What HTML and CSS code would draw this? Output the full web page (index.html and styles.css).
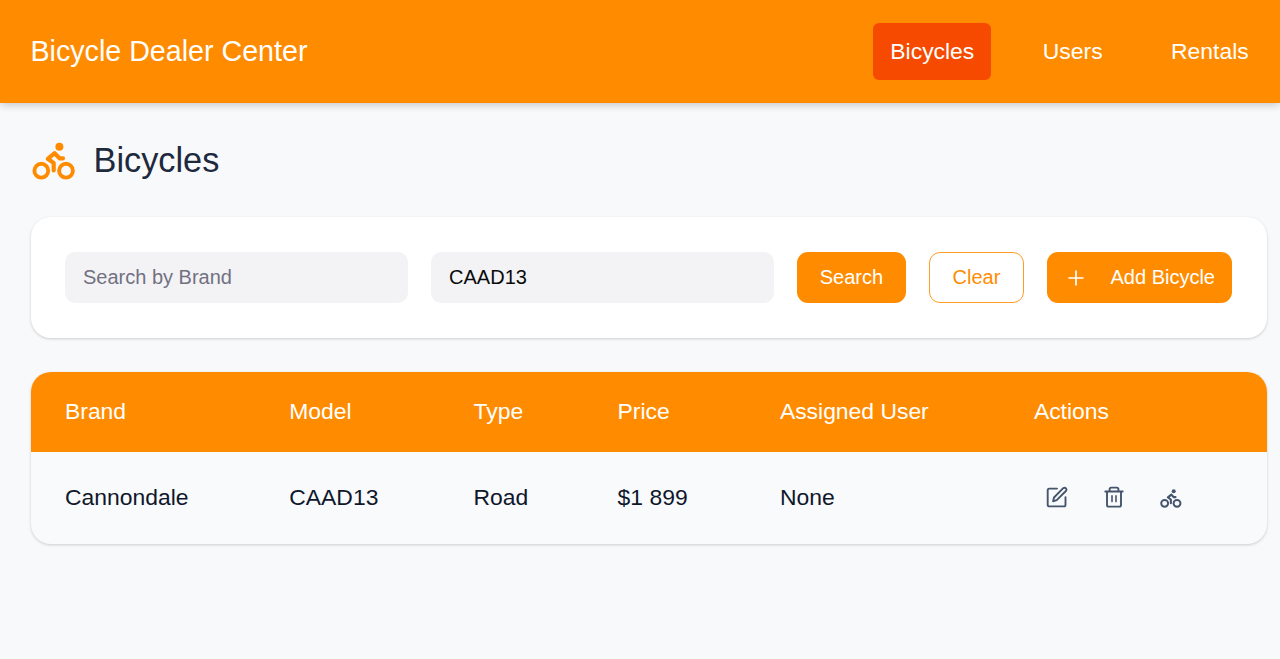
FILE: index.html
```html
<!DOCTYPE html>
<html lang="en">
<head>
<meta charset="utf-8">
<title>Bicycle Dealer Center</title>
<link rel="stylesheet" href="styles.css">
</head>
<body>
<svg class="symbols" aria-hidden="true">
  <symbol id="rider" viewBox="0 0 44 38">
    <g fill="none" stroke="currentColor" stroke-width="3.9" stroke-linejoin="round" stroke-linecap="round">
      <circle cx="9.3" cy="28.7" r="6.9"/><circle cx="34" cy="28.7" r="6.9"/>
      <path stroke-width="4.2" d="M31 16.3H27.5L22.6 11.2L15.8 16.8L21.7 21V28.5"/>
    </g>
    <circle cx="27.4" cy="4.7" r="4" fill="currentColor"/>
  </symbol>
</svg>
<header class="topbar">
  <div class="brand">Bicycle Dealer Center</div>
  <nav class="nav">
    <a class="nav-link active">Bicycles</a>
    <a class="nav-link">Users</a>
    <a class="nav-link">Rentals</a>
  </nav>
</header>
<main class="page">
  <div class="page-title">
    <svg class="title-icon"><use href="#rider"/></svg>
    <h1>Bicycles</h1>
  </div>
  <section class="card filters">
    <input class="field" placeholder="Search by Brand">
    <input class="field" placeholder="Search by Model" value="CAAD13">
    <button class="btn search">Search</button>
    <button class="btn clear">Clear</button>
    <button class="btn add">
      <svg class="plus" viewBox="0 0 16 16"><path d="M8 .5V15.5M.5 8H15.5" stroke="currentColor" stroke-width="1.7"/></svg>
      <span>Add Bicycle</span>
    </button>
  </section>
  <section class="card table">
    <div class="row head">
      <span>Brand</span><span>Model</span><span>Type</span><span>Price</span><span>Assigned User</span><span>Actions</span>
    </div>
    <div class="row">
      <span>Cannondale</span><span>CAAD13</span><span>Road</span><span>$1 899</span><span>None</span>
      <div class="actions">
        <svg class="action" viewBox="0 0 24 24" fill="none" stroke="currentColor" stroke-width="1.9" stroke-linejoin="round" stroke-linecap="round"><path d="M12 3.6H4.3Q2.7 3.6 2.7 5.2V19.8Q2.7 21.4 4.3 21.4H18.9Q20.5 21.4 20.5 19.8V12.2"/><path d="M8.1 16.3L9 12.5L18.2 3.2Q19.7 2 21 3.4Q22.1 4.7 20.9 6L11.7 15.2Z"/></svg>
        <svg class="action" viewBox="0 0 24 24" fill="none" stroke="currentColor" stroke-width="1.9" stroke-linejoin="round" stroke-linecap="round"><path d="M3.3 6.5H20.7M7.6 6.2V4.2Q7.6 2.6 9.2 2.6H14.8Q16.4 2.6 16.4 4.2V6.2M5 6.7V20Q5 21.6 6.6 21.6H17.4Q19 21.6 19 20V6.7"/><path stroke-width="1.6" d="M10 10.9V16.6M14 10.9V16.6"/></svg>
        <svg class="action rider"><use href="#rider"/></svg>
      </div>
    </div>
  </section>
</main>
</body>
</html>
```
FILE: styles.css
```css
* { box-sizing: border-box; }
body {
  margin: 0;
  min-height: 659px;
  background: #f8f9fb;
  color: #0f172b;
  font-family: "Liberation Sans", Arial, sans-serif;
  font-size: 22.9px;
}
.symbols { display: none; }
.topbar {
  display: flex;
  align-items: center;
  justify-content: space-between;
  height: 103px;
  padding: 0 14.3px 0 30.5px;
  background: #ff8c00;
  color: #fff;
  box-shadow: 0 2px 8px rgba(0, 0, 0, .2);
}
.brand { font-size: 28.65px; }
.nav { display: flex; gap: 34.5px; }
.nav-link {
  height: 57px;
  padding: 0 17px;
  border-radius: 6px;
  line-height: 57px;
}
.nav-link.active { background: #f54a00; }
.page { padding: 34px 13.5px 0 30.5px; }
.page-title {
  display: flex;
  align-items: center;
  gap: 18px;
  height: 46px;
  padding-left: 1px;
}
.title-icon { width: 44px; height: 38px; margin-top: 2px; color: #ff8c00; }
h1 {
  margin: 0;
  color: #1d293d;
  font-size: 34.3px;
  font-weight: 400;
}
.card {
  border-radius: 20px;
  box-shadow: 0 1px 3px rgba(0, 0, 0, .18);
}
.filters {
  display: flex;
  gap: 22.8px;
  height: 120.2px;
  margin-top: 34.4px;
  padding: 34.5px;
  background: #fff;
}
.field, .btn {
  height: 51.4px;
  font: 20px "Liberation Sans", Arial, sans-serif;
}
.field {
  flex: 1;
  min-width: 0;
  padding: 0 18px;
  border: 0;
  border-radius: 10px;
  background: #f3f3f5;
  color: #0a0a0a;
}
.field::placeholder { color: #717182; opacity: 1; }
.btn {
  padding: 0;
  border: 0;
  border-radius: 11px;
  background: #ff8c00;
  color: #fff;
}
.search { width: 108.7px; }
.clear {
  width: 95.6px;
  border: 1px solid #ff9c26;
  background: #fff;
  color: #ff8c00;
}
.add {
  display: flex;
  align-items: center;
  justify-content: space-between;
  width: 185px;
  padding: 0 17px 0 20.5px;
}
.plus { width: 16px; height: 16px; }
.table { margin-top: 34.4px; overflow: hidden; background: #f9fafc; }
.row {
  display: grid;
  grid-template-columns: 224.3px 184.3px 144px 162.3px 254px 1fr;
  align-items: center;
  height: 91.6px;
  padding: 0 34.5px .8px;
}
.row.head { height: 80px; padding-bottom: 0; background: #ff8c00; color: #fff; }
.actions {
  display: flex;
  align-items: center;
  gap: 33px;
  padding-left: 11px;
  color: #45556c;
}
.action { width: 24px; height: 24px; }
.action.rider { width: 22px; height: 19px; margin: 2px 0 0 1px; }
```
